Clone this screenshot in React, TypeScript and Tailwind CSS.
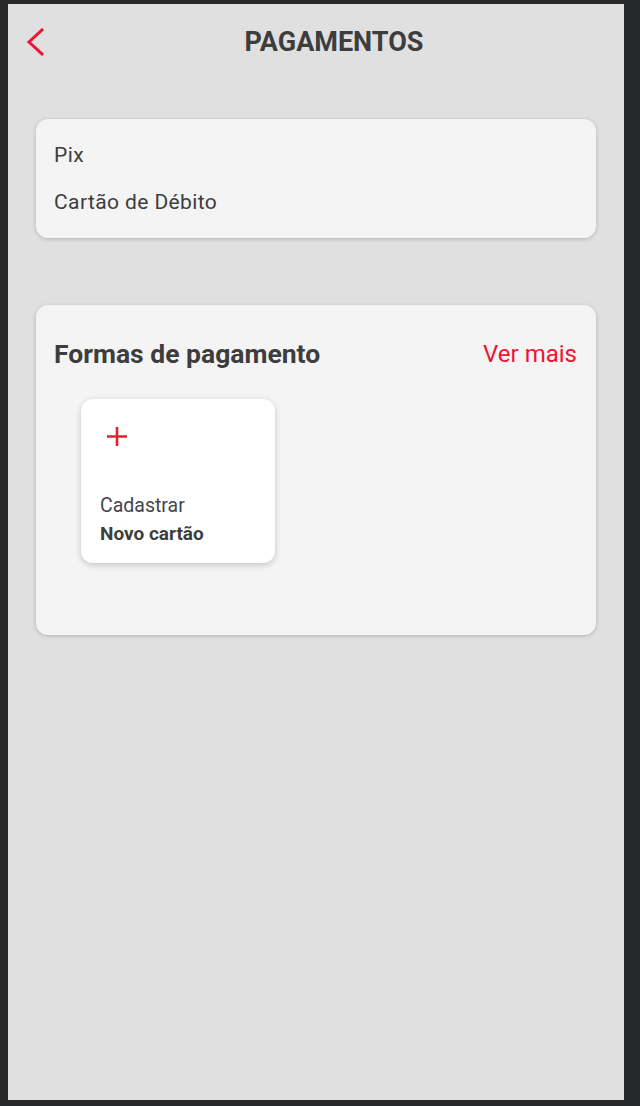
import React from "react";

const App: React.FC = () => {
    return (
        <div className="h-[1106px] w-[640px] bg-[#27282a] pt-[4px] pl-[8px] pr-[16px] pb-[6px] font-['Roboto',_'Liberation_Sans',_sans-serif]">
            <div className="h-full w-full bg-[#e0e0e0] flex flex-col">
                {/* Header */}
                <div className="h-[76px] flex items-center">
                    <button className="w-[36px] pl-[18px] flex items-center">
                        <svg width="18" height="28" viewBox="0 0 18 28" fill="none">
                            <path d="M16 2 L3 14 L16 26" stroke="#ef1530" strokeWidth="3" strokeLinecap="square" />
                        </svg>
                    </button>
                    <h1 className="flex-1 text-center text-[27px] font-bold text-[#3d3d3d] leading-none">
                        PAGAMENTOS
                    </h1>
                </div>

                {/* Payment types */}
                <div className="mx-[28px] mt-[39px] rounded-xl bg-[#f4f4f4] shadow-[0_1px_4px_rgba(0,0,0,0.2)] px-[18px] pt-[23px] pb-[23px] flex flex-col gap-[21px] text-[21px] tracking-[0.4px] leading-[26px] text-[#3d3d3d]">
                    <div>Pix</div>
                    <div>Cartão de Débito</div>
                </div>

                {/* Formas de pagamento */}
                <div className="mx-[28px] mt-[67px] h-[330px] rounded-xl bg-[#f4f4f4] shadow-[0_1px_4px_rgba(0,0,0,0.2)] pl-[18px] pr-[19px] pt-[34px]">
                    <div className="flex items-center justify-between">
                        <h2 className="text-[26.5px] leading-[30px] font-bold text-[#3d3d3d]">
                            Formas de pagamento
                        </h2>
                        <span className="text-[24px] leading-[30px] text-[#ef1530]">Ver mais</span>
                    </div>

                    <div className="mt-[30px] ml-[27px] w-[194px] h-[164px] rounded-xl bg-white shadow-[0_2px_6px_rgba(0,0,0,0.2)] flex flex-col pl-[19px] pt-[27px]">
                        <svg width="22" height="22" viewBox="0 0 22 22" className="ml-[6px]">
                            <path d="M11 1 V20 M1 10.5 H21" stroke="#ee1c2e" strokeWidth="2.6" />
                        </svg>
                        <div className="mt-[46px] text-[19.5px] leading-[24px] text-[#45454d]">Cadastrar</div>
                        <div className="mt-[4px] text-[19px] leading-[24px] font-bold text-[#3d3d3d]">Novo cartão</div>
                    </div>
                </div>
            </div>
        </div>
    );
};

export default App;
